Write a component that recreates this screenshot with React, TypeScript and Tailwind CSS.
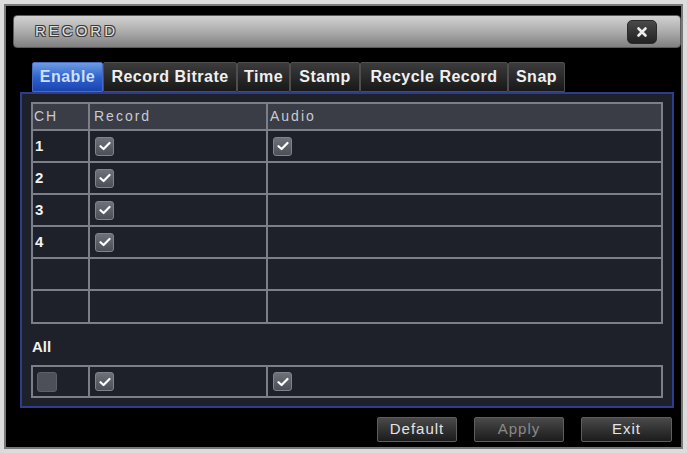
import React from "react";

function Check({ on = true }: { on?: boolean }) {
  return (
    <div className="w-[19px] h-[19px] rounded-[3px] border border-[#80838b] bg-linear-to-b from-[#6e7179] to-[#4c4f57] flex items-center justify-center">
      {on && (
        <svg width="12" height="10" viewBox="0 0 12 10">
          <path d="M1.5 5.2 L4.6 8 L10.5 2" stroke="#ffffff" strokeWidth="2.2" fill="none" strokeLinecap="round" strokeLinejoin="round" />
        </svg>
      )}
    </div>
  );
}

const tabs = [
  { label: "Enable", w: "w-[71px]", active: true },
  { label: "Record Bitrate", w: "w-[134px]" },
  { label: "Time", w: "w-[53px]" },
  { label: "Stamp", w: "w-[70px]" },
  { label: "Recycle Record", w: "w-[148px]" },
  { label: "Snap", w: "w-[57px]" },
];

const rows: { ch: string; rec: boolean; aud: boolean }[] = [
  { ch: "1", rec: true, aud: true },
  { ch: "2", rec: true, aud: false },
  { ch: "3", rec: true, aud: false },
  { ch: "4", rec: true, aud: false },
  { ch: "", rec: false, aud: false },
  { ch: "", rec: false, aud: false },
];

export default function App() {
  return (
    <div className="w-[687px] h-[453px] bg-[#dcdcdc] pt-[4px] pl-[4px] overflow-hidden font-['Liberation_Sans',Arial,sans-serif]">
      <div className="w-[679px] h-[445px] border-2 border-[#7a7a7a] bg-black flex flex-col">
        {/* Title bar */}
        <div className="ml-[7px] mt-[9px] w-[668px] h-[33px] rounded-[4px] bg-linear-to-b from-[#d2d2d2] via-[#acacac] to-[#808080] border border-[#5a5a5a] flex items-center justify-between">
          <span className="ml-[21px] text-[15px] tracking-[3px] text-[#e2e2e2] [text-shadow:1px_1px_0_#3a3a3a,-1px_-1px_0_#3a3a3a,1px_-1px_0_#3a3a3a,-1px_1px_0_#3a3a3a]">
            RECORD
          </span>
          <div className="mr-[23px] w-[30px] h-[24px] rounded-[5px] bg-linear-to-b from-[#4a4a4a] to-[#222222] border border-[#2a2a2a] flex items-center justify-center">
            <svg width="12" height="12" viewBox="0 0 12 12">
              <path d="M2.5 2.5 L9.5 9.5 M9.5 2.5 L2.5 9.5" stroke="#eeeeee" strokeWidth="2.6" strokeLinecap="round" />
            </svg>
          </div>
        </div>

        {/* Tabs */}
        <div className="ml-[26px] mt-[14px] h-[30px] flex">
          {tabs.map((t) =>
            t.active ? (
              <div
                key={t.label}
                className={`${t.w} h-full rounded-t-[2px] bg-linear-to-b from-[#6f9be0] via-[#2f63cf] to-[#1a44b0] border border-[#4a6cc0] flex items-center justify-center text-[16px] font-bold tracking-[0.5px] text-[#cfe0ff]`}
              >
                {t.label}
              </div>
            ) : (
              <div
                key={t.label}
                className={`${t.w} h-full rounded-t-[2px] bg-linear-to-b from-[#3c3c3c] to-[#181818] border border-[#4e4e4e] flex items-center justify-center text-[16px] font-bold tracking-[0.5px] text-[#f0f0f0]`}
              >
                {t.label}
              </div>
            )
          )}
        </div>

        {/* Panel */}
        <div className="ml-[14px] w-[654px] h-[316px] border-2 border-[#2c3d8e] bg-[#1e2129] pl-[9px] pt-[8px] flex flex-col">
          {/* Table */}
          <div className="w-[632px] border-2 border-[#7b7f88] flex flex-col text-[14px] tracking-[2px] text-[#c9cbd0]">
            <div className="h-[27px] flex border-b-2 border-[#7b7f88] bg-[#3a3d45]">
              <div className="w-[57px] border-r-2 border-[#7b7f88] pl-[1px] flex items-center">CH</div>
              <div className="w-[178px] border-r-2 border-[#7b7f88] pl-[4px] flex items-center">Record</div>
              <div className="flex-1 pl-[2px] flex items-center">Audio</div>
            </div>
            {rows.map((r, i) => (
              <div
                key={i}
                className={`${i < rows.length - 1 ? "h-[32px] border-b-2" : "h-[31px]"} flex border-[#7b7f88]`}
              >
                <div className="w-[57px] border-r-2 border-[#7b7f88] pl-[2px] flex items-center font-bold text-[#f2f2f2] text-[15px]">
                  {r.ch}
                </div>
                <div className="w-[178px] border-r-2 border-[#7b7f88] pl-[5px] flex items-center">
                  {r.rec && <Check />}
                </div>
                <div className="flex-1 pl-[5px] flex items-center">{r.aud && <Check />}</div>
              </div>
            ))}
          </div>

          <div className="mt-[14px] h-[18px] pl-[1px] text-[15px] font-bold text-[#f0f0f0] flex items-center">All</div>

          <div className="mt-[9px] w-[632px] h-[33px] border-2 border-[#7b7f88] flex">
            <div className="w-[57px] border-r-2 border-[#7b7f88] pl-[4px] flex items-center">
              <div className="w-[20px] h-[20px] rounded-[3px] bg-[#4d5058] border border-[#5d6068]" />
            </div>
            <div className="w-[178px] border-r-2 border-[#7b7f88] pl-[5px] flex items-center">
              <Check />
            </div>
            <div className="flex-1 pl-[5px] flex items-center">
              <Check />
            </div>
          </div>
        </div>

        {/* Buttons */}
        <div className="mt-[9px] pr-[9px] flex justify-end gap-[17px] text-[15px] tracking-[1px]">
          <div className="w-[80px] h-[25px] rounded-[2px] border border-[#5e5e5e] bg-linear-to-b from-[#4a4a4a] to-[#1c1c1c] flex items-center justify-center text-[#e4e4e4]">
            Default
          </div>
          <div className="w-[90px] h-[25px] rounded-[2px] border border-[#5e5e5e] bg-linear-to-b from-[#4a4a4a] to-[#1c1c1c] flex items-center justify-center text-[#8a8a8a]">
            Apply
          </div>
          <div className="w-[91px] h-[25px] rounded-[2px] border border-[#5e5e5e] bg-linear-to-b from-[#4a4a4a] to-[#1c1c1c] flex items-center justify-center text-[#e4e4e4]">
            Exit
          </div>
        </div>
      </div>
    </div>
  );
}
